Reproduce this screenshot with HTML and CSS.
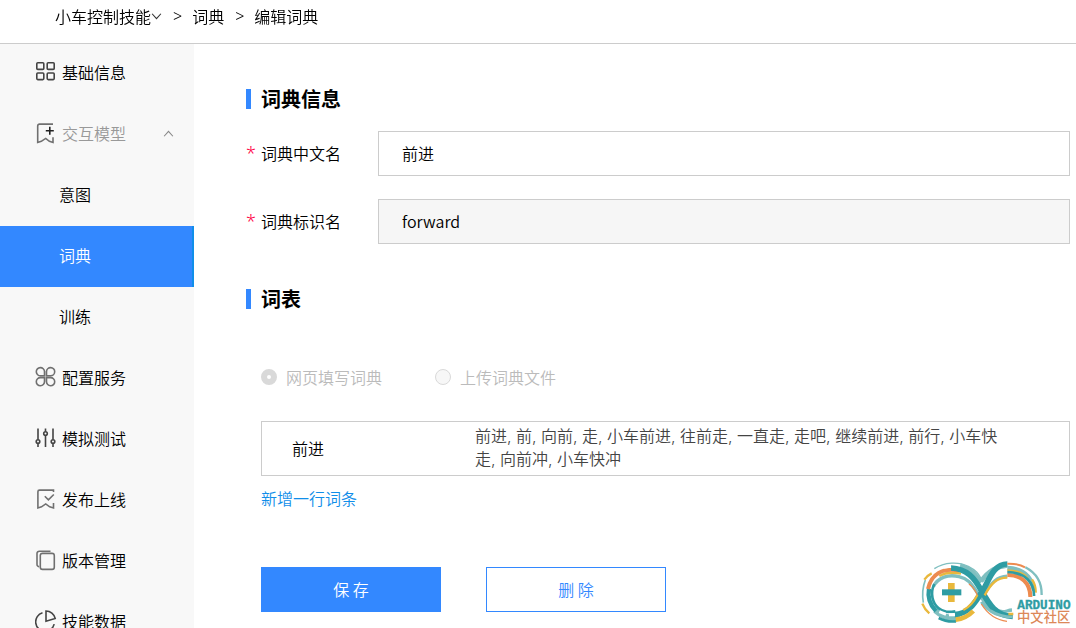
FILE: index.html
```html
<!DOCTYPE html>
<html lang="zh-CN">
<head>
<meta charset="utf-8">
<meta name="viewport" content="width=device-width, initial-scale=1">
<title>编辑词典</title>
<link rel="stylesheet" href="styles.css">
</head>
<body>
<div class="app">
  <header class="topbar">
    <nav class="crumbs" aria-label="面包屑">
      <button class="crumb-menu" type="button">小车控制技能<svg class="chevron" viewBox="0 0 10 10"><path d="M1 2.5 5 7l4-4.5"/></svg></button>
      <span class="sep">&gt;</span>
      <a href="#">词典</a>
      <span class="sep">&gt;</span>
      <span>编辑词典</span>
    </nav>
  </header>
  <div class="body">
    <nav class="sidebar" aria-label="技能菜单">
      <a class="item" href="#"><svg class="icon dark" viewBox="0 0 22 22"><rect x="1.8" y="1.8" width="7" height="6.6" rx="1"/><rect x="12.2" y="1.8" width="7" height="6.6" rx="1"/><rect x="1.8" y="12" width="7" height="6.6" rx="1"/><rect x="12.2" y="12" width="7" height="6.6" rx="1"/></svg>基础信息</a>
      <button class="item muted" type="button"><svg class="icon" viewBox="0 0 22 22"><path d="M18 2.1H4.5a1.8 1.8 0 0 0-1.8 1.8v16.6l3.6-1.2 4.4-2.9 3.7 2.9 3.6 1.2v-5.2"/><path class="strong" d="M14.8 4.8v8M10.8 8.8h8"/></svg>交互模型<svg class="chevron fold" viewBox="0 0 10 10"><path d="M1 7.5 5 3l4 4.5"/></svg></button>
      <a class="item sub" href="#">意图</a>
      <a class="item sub active" href="#" aria-current="page">词典</a>
      <a class="item sub" href="#">训练</a>
      <a class="item" href="#"><svg class="icon" viewBox="0 0 22 22"><path d="M9.5 9.8H5.6a4.1 4.1 0 1 1 3.9-4.2zM11.5 9.8V5.6a4.1 4.1 0 1 1 4 4.2zM9.5 11.6v4a4.1 4.1 0 1 1-4-4zM11.5 11.6h4a4.1 4.1 0 1 1-4 4z"/></svg>配置服务</a>
      <a class="item" href="#"><svg class="icon dark" viewBox="0 0 22 22"><path d="M3 1.5v11M3 16.5v3.500M10.500 1.500v3M10.500 8.500v11.500M18 1.500v11M18 16.500v3.500"/><circle cx="3" cy="14.500" r="1.800"/><circle cx="10.500" cy="6.500" r="1.800"/><circle cx="18" cy="14.500" r="1.800"/></svg>模拟测试</a>
      <a class="item" href="#"><svg class="icon" viewBox="0 0 22 22"><path d="M18.5 4V2.1H4.500a1.600 1.600 0 0 0-1.600 1.600v16.300l3.600-1.200 4.200-2.900 4 2.900 3.800 1.200v-5M9.800 8.300l3.600 3.600 5.400-5.400"/></svg>发布上线</a>
      <a class="item" href="#"><svg class="icon" viewBox="0 0 22 22"><path d="M15.500 2.200H4.200a2.200 2.200 0 0 0-2.200 2.200v11a2.200 2.200 0 0 0 2.200 2.200"/><rect x="5.300" y="4.400" width="14" height="16" rx="2.200"/></svg>版本管理</a>
      <a class="item" href="#"><svg class="icon dark" viewBox="0 0 22 22"><path d="M7.500 2.800a9.400 9.400 0 1 0 11.700 11.300M11 1v10.200l9.200-2.700A9.600 9.600 0 0 0 11 1z"/></svg>技能数据</a>
    </nav>
    <main class="content">
      <form class="form">
        <h2 class="heading">词典信息</h2>
        <div class="field">
          <label for="name-cn"><span class="star">*</span>词典中文名</label>
          <input id="name-cn" class="text" type="text" value="前进">
        </div>
        <div class="field">
          <label for="name-id"><span class="star">*</span>词典标识名</label>
          <input id="name-id" class="text locked" type="text" value="forward" readonly>
        </div>
        <h2 class="heading second">词表</h2>
        <div class="section">
          <div class="radios">
            <label><input type="radio" name="source" checked disabled>网页填写词典</label>
            <label><input type="radio" name="source" disabled>上传词典文件</label>
          </div>
          <table class="words">
            <tr>
              <th scope="row">前进</th>
              <td>前进, 前, 向前, 走, 小车前进, 往前走, 一直走, 走吧, 继续前进, 前行, 小车快走, 向前冲, 小车快冲</td>
            </tr>
          </table>
          <a class="add" href="#">新增一行词条</a>
          <div class="actions">
            <button class="btn primary" type="submit">保 存</button>
            <button class="btn" type="button">删 除</button>
          </div>
        </div>
      </form>
    </main>
  </div>
  <svg class="logo" viewBox="60 57 459 195" role="img" aria-label="Arduino 中文社区">
    <g fill="none">
      <g stroke="#7fbfc0">
        <path stroke-width="4" d="M103 86C133 66 176 64 205 79S236 103 247 122"/>
        <path stroke-width="5" d="M70 188Q64 151 76 120"/>
        <path stroke-width="10" d="M100 140C114 112 145 102 177 110S214 132 232 158 269 201 291 211 318 211 336 210"/>
        <path stroke-width="15" d="M180 78C212 86 227 105 243 128"/>
        <path stroke-width="14" d="M243 124C264 93 288 79 322 76"/>
        <path stroke-width="18" d="M106 211Q140 242 181 233"/>
        <path stroke-width="13" d="M322 84C366 85 394 107 402 151"/>
        <path stroke-width="7" d="M376 82Q426 108 425 165"/>
        <path stroke-width="12" d="M245 185C270 219 298 228 338 228"/>
        <path stroke-width="9" d="M252 166C273 125 292 110 322 108"/>
      </g>
      <path stroke="#2e9ca3" stroke-width="13" d="M87 146Q80 185 108 213"/>
      <path stroke="#2e9ca3" stroke-width="8" d="M103 132C89 160 98 190 115 204S147 217 166 214"/>
      <path stroke="#2e9ca3" stroke-width="8" d="M116 234Q140 247 168 244"/>
      <path stroke="#2e9ca3" stroke-width="17" d="M164 224C207 221 224 188 245 157S277 72 322 72"/>
      <path stroke="#e9b83c" stroke-width="14" d="M167 239Q198 236 220 213"/>
      <path stroke="#e9b83c" stroke-width="7" d="M190 210Q216 197 232 165M67 191Q74 209 88 220M73 119Q82 106 95 100M118 108Q144 93 183 101"/>
      <path stroke="#ed8b4f" stroke-width="12" d="M84 147C94 101 128 83 178 91"/>
      <path stroke="#2e9ca3" stroke-width="17" d="M153 84C202 86 223 114 245 153S288 229 338 229"/>
      <path stroke="#7fbfc0" stroke-width="8" d="M272 212Q300 231 338 231"/>
      <path stroke="#e9b83c" stroke-width="7" d="M254 166C275 127 291 114 322 113M322 91Q369 94 382 115M396 118Q408 136 407 158M325 222H340"/>
      <path stroke="#ed8b4f" stroke-width="4" d="M207 132Q223 144 232 165M244 192C264 224 287 240 321 244"/>
      <path stroke="#ed8b4f" stroke-width="6" d="M322 71Q356 70 375 82"/>
      <path stroke="#ed8b4f" stroke-width="12" d="M322 105C363 104 391 128 391 171"/>
      <path stroke="#2e9ca3" stroke-width="8" d="M322 96Q362 98 382 117Q403 138 402 168"/>
      <path stroke="#fff" stroke-width="9" d="M130 82L153 79M118 215L138 223M147 224H165"/>
      <path stroke="#e9b83c" stroke-width="20" d="M154 129V186"/>
      <path stroke="#2e9ca3" stroke-width="18" d="M126 157H184"/>
    </g>
    <text class="logo-en" x="352" y="206">ARDUINO</text>
    <text class="logo-cn" x="351" y="245">中文社区</text>
  </svg>
</div>
</body>
</html>
```
FILE: styles.css
```css
* { box-sizing: border-box; }

body {
  margin: 0;
  background: #fff;
  color: #000;
  font: 350 16px/24px "Noto Sans CJK SC", "Microsoft YaHei", sans-serif;
}

a { color: inherit; text-decoration: none; }
button, input { font: inherit; color: inherit; }
button { cursor: pointer; }
svg { flex: none; }

.app {
  position: relative;
  display: flex;
  flex-direction: column;
  height: 100vh;
}

.topbar {
  flex: none;
  height: 43px;
  padding: 4px 55px;
  box-shadow: 0 1px 0 #ccc;
  z-index: 1;
}

.crumbs { display: flex; align-items: center; }
.crumb-menu {
  display: flex;
  align-items: center;
  padding: 0;
  border: 0;
  background: none;
}
.sep { margin: 0 10px 0 11px; font-family: "Noto Sans", sans-serif; }

.chevron {
  width: 11px;
  height: 11px;
  fill: none;
  stroke: #333;
  stroke-width: 1;
}

.body { display: flex; flex: 1; min-height: 0; }

.sidebar {
  flex: none;
  width: 194px;
  background: #f8f8f8;
  overflow-y: auto;
  scrollbar-width: none;
}

.item {
  display: flex;
  align-items: center;
  gap: 5px;
  width: 100%;
  height: 61px;
  padding: 0 20px 3px 35px;
  border: 0;
  background: none;
}
.item.sub { padding-left: 59px; }
.item.muted { color: #999; }
.item.active {
  background: #38f;
  color: #fff;
  border-right: 2px solid #108ee9;
}

.icon {
  width: 22px;
  height: 22px;
  fill: none;
  stroke: #707070;
  stroke-width: 1.6;
}
.icon.dark { stroke: #444; }
.icon .strong { stroke: #222; }
.fold { margin-left: auto; stroke: #888; }

.content { flex: 1; padding: 44px 6px 16px 52px; overflow: hidden; }

.heading {
  display: flex;
  align-items: center;
  gap: 10px;
  margin: 0 0 20px;
  font-size: 20px;
  line-height: 24px;
  font-weight: 700;
}
.heading::before {
  content: "";
  width: 5px;
  height: 20px;
  background: #38f;
}
.heading.second { margin: 43px 0 0; }

.field { display: flex; align-items: center; margin-bottom: 23px; }
.field label { display: flex; flex: none; width: 132px; padding-bottom: 1px; }
.star { width: 15px; color: #f04; font-family: "Noto Sans", sans-serif; font-size: 18px; }

.text {
  flex: 1;
  min-width: 0;
  height: 45px;
  padding: 0 23px 1px;
  border: 1px solid #ccc;
  border-radius: 0;
  background: #fff;
  outline: 0;
}
.text.locked { background: #f6f6f6; }

.section { padding-left: 15px; }

.radios { display: flex; gap: 53px; margin: 54px 0 32px; color: #bbb; }
.radios label { display: flex; align-items: center; gap: 9px; }
.radios input {
  appearance: none;
  width: 16px;
  height: 16px;
  margin: 0;
  border: 1px solid #d9d9d9;
  border-radius: 50%;
  background: #f7f7f7;
}
.radios input:checked { border: 6px solid #d9d9d9; background: #fff; }

.words {
  width: 100%;
  height: 55px;
  border: 1px solid #ccc;
  border-spacing: 0;
  line-height: 23px;
}
.words th { width: 213px; padding: 0 0 0 30px; text-align: left; font-weight: inherit; }
.words td {
  padding: 3px 64px 4px 0;
  color: #444;
  font-family: "Inter", "Noto Sans CJK SC", sans-serif;
}

.add { display: inline-block; margin-top: 10px; color: #108ee9; }

.actions { display: flex; gap: 45px; margin-top: 57px; }
.btn {
  width: 180px;
  height: 45px;
  padding: 0 0 2px;
  border: 1px solid #38f;
  background: #fff;
  color: #38f;
}
.btn.primary { background: #38f; color: #fff; }

.logo {
  position: absolute;
  right: 3px;
  bottom: 4px;
  width: 153px;
  height: 65px;
  overflow: visible;
}
.logo-en {
  fill: #2e9ca3;
  stroke: #2e9ca3;
  font: 700 38px "Liberation Mono", monospace;
}
.logo-cn { fill: #dc8858; font: 500 40px "Noto Sans CJK SC", sans-serif; }
```
